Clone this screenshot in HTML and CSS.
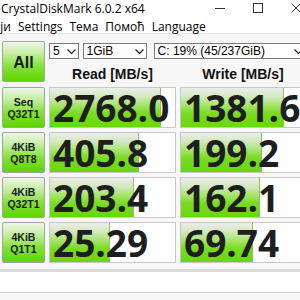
FILE: index.html
```html
<!DOCTYPE html>
<html>
<head>
<meta charset="utf-8">
<link rel="stylesheet" href="styles.css">
</head>
<body>
<div class="window">
  <div class="titlebar">
    <span class="title">CrystalDiskMark 6.0.2 x64</span>
    <div class="controls">
      <span class="ctl"><svg width="10" height="10" viewBox="0 0 10 10"><line x1="0" y1="5.5" x2="10" y2="5.5" stroke="#333" stroke-width="1"/></svg></span>
      <span class="ctl"><svg width="10" height="10" viewBox="0 0 10 10"><rect x="0.5" y="0.5" width="9" height="9" fill="none" stroke="#333" stroke-width="1"/></svg></span>
      <span class="ctl"><svg width="10" height="10" viewBox="0 0 10 10"><path d="M0.5 0.5 L9.5 9.5 M9.5 0.5 L0.5 9.5" stroke="#333" stroke-width="1"/></svg></span>
    </div>
  </div>
  <div class="menubar">
    <span class="menu first">ји</span>
    <span class="menu">Settings</span>
    <span class="menu">Тема</span>
    <span class="menu">Помоћ</span>
    <span class="menu">Language</span>
  </div>
  <div class="main">
    <div class="grid">
      <div class="btn all">All</div>
      <div class="top">
        <div class="combos">
          <div class="combo c-count"><span>5</span><svg width="9" height="5" viewBox="0 0 9 5"><polyline points="0.5,0.5 4.5,4.5 8.5,0.5" fill="none" stroke="#222" stroke-width="1.2"/></svg></div>
          <div class="combo c-size"><span>1GiB</span><svg width="9" height="5" viewBox="0 0 9 5"><polyline points="0.5,0.5 4.5,4.5 8.5,0.5" fill="none" stroke="#222" stroke-width="1.2"/></svg></div>
          <div class="combo c-drive"><span>C: 19% (45/237GiB)</span><svg width="9" height="5" viewBox="0 0 9 5"><polyline points="0.5,0.5 4.5,4.5 8.5,0.5" fill="none" stroke="#222" stroke-width="1.2"/></svg></div>
        </div>
        <div class="heads">
          <div class="head">Read [MB/s]</div>
          <div class="head">Write [MB/s]</div>
        </div>
      </div>

      <div class="btn label"><span>Seq</span><span>Q32T1</span></div>
      <div class="cell"><div class="bar" style="width:89%"></div><div class="num">2768.0</div></div>
      <div class="cell"><div class="bar" style="width:83%"></div><div class="num">1381.6</div></div>

      <div class="btn label"><span>4KiB</span><span>Q8T8</span></div>
      <div class="cell"><div class="bar" style="width:71%"></div><div class="num">405.8</div></div>
      <div class="cell"><div class="bar" style="width:65%"></div><div class="num">199.2</div></div>

      <div class="btn label"><span>4KiB</span><span>Q32T1</span></div>
      <div class="cell"><div class="bar" style="width:67%"></div><div class="num">203.4</div></div>
      <div class="cell"><div class="bar" style="width:64%"></div><div class="num">162.1</div></div>

      <div class="btn label"><span>4KiB</span><span>Q1T1</span></div>
      <div class="cell"><div class="bar" style="width:48%"></div><div class="num">25.29</div></div>
      <div class="cell"><div class="bar" style="width:58%"></div><div class="num">69.74</div></div>
    </div>
    <div class="comment"></div>
  </div>
</div>
</body>
</html>
```

FILE: styles.css
```css
html, body {
  margin: 0;
  padding: 0;
  width: 300px;
  height: 300px;
  overflow: hidden;
  background: #f7f7f7;
}

.window {
  width: 315px;
  height: 300px;
  font-family: "Open Sans", "Liberation Sans", sans-serif;
  color: #000;
  background: #f7f7f7;
}

.titlebar {
  height: 19px;
  display: flex;
  align-items: center;
  justify-content: space-between;
  background: #fff;
}

.title {
  font-size: 12px;
  margin-left: 1px;
  margin-top: -3px;
  white-space: nowrap;
}

.controls {
  display: flex;
  align-self: flex-start;
}

.ctl {
  width: 38px;
  height: 15px;
  display: flex;
  align-items: center;
  justify-content: center;
}

.menubar {
  height: 14px;
  display: flex;
  align-items: center;
  gap: 7px;
  background: #fff;
  border-bottom: 1px solid #e4e4e4;
  font-size: 12px;
  white-space: nowrap;
}

.menu.first {
  width: 11px;
  overflow: hidden;
  direction: rtl;
}

.main {
  padding-top: 7px;
}

.grid {
  display: grid;
  grid-template-columns: 43px 127px 126px;
  grid-template-rows: 42px repeat(4, 41px);
  column-gap: 4px;
  row-gap: 4px;
  padding-left: 2px;
}

.btn {
  box-sizing: border-box;
  border: 1px solid #a3a3a3;
  border-radius: 2px;
  background: linear-gradient(to bottom, #eef7e7 0%, #c4eda0 30%, #86e23a 62%, #5ed400 100%);
  display: flex;
  flex-direction: column;
  align-items: center;
  justify-content: center;
  font-family: "Liberation Sans", sans-serif;
  font-weight: 700;
  color: #1a1a1a;
}

.all {
  height: 41px;
  font-size: 16px;
  padding-top: 2px;
}

.label {
  font-size: 10.5px;
  line-height: 12px;
}

.top {
  grid-column: 2 / 4;
  display: flex;
  flex-direction: column;
}

.combos {
  display: flex;
  margin-top: 2px;
  height: 16px;
}

.combo {
  box-sizing: border-box;
  height: 16px;
  border: 1px solid #7a7a7a;
  background: #fff;
  display: flex;
  align-items: center;
  justify-content: space-between;
  padding: 0 2px 0 3px;
  font-family: "Liberation Sans", sans-serif;
  font-size: 12px;
  white-space: nowrap;
}

.c-count { width: 30px; }
.c-size { width: 65px; margin-left: 4px; }
.c-drive { width: 155px; margin-left: 7px; }

.heads {
  display: grid;
  grid-template-columns: 127px 126px;
  column-gap: 4px;
  margin-top: 7px;
}

.head {
  text-align: center;
  font-family: "Liberation Sans", sans-serif;
  font-weight: 700;
  font-size: 14px;
  color: #111;
}

.cell {
  box-sizing: border-box;
  border: 1px solid #c8c8c8;
  background: #fff;
  display: grid;
  overflow: hidden;
}

.bar, .num {
  grid-area: 1 / 1;
}

.bar {
  height: 100%;
  box-sizing: border-box;
  border-right: 1px solid #8cc06a;
  background: linear-gradient(to bottom, #eceee9 0%, #d3e9bf 22%, #a5e46a 45%, #79dc20 65%, #68d80a 100%);
}

.num {
  align-self: center;
  padding-left: 3px;
  font-family: "Open Sans", sans-serif;
  font-weight: 700;
  font-size: 37px;
  line-height: 1;
  color: #1e1e1e;
  white-space: nowrap;
}

.comment {
  margin-top: 6px;
  height: 20px;
  border-top: 3px solid #dadada;
  border-bottom: 1px solid #cfcfcf;
  background: #fff;
}
```
